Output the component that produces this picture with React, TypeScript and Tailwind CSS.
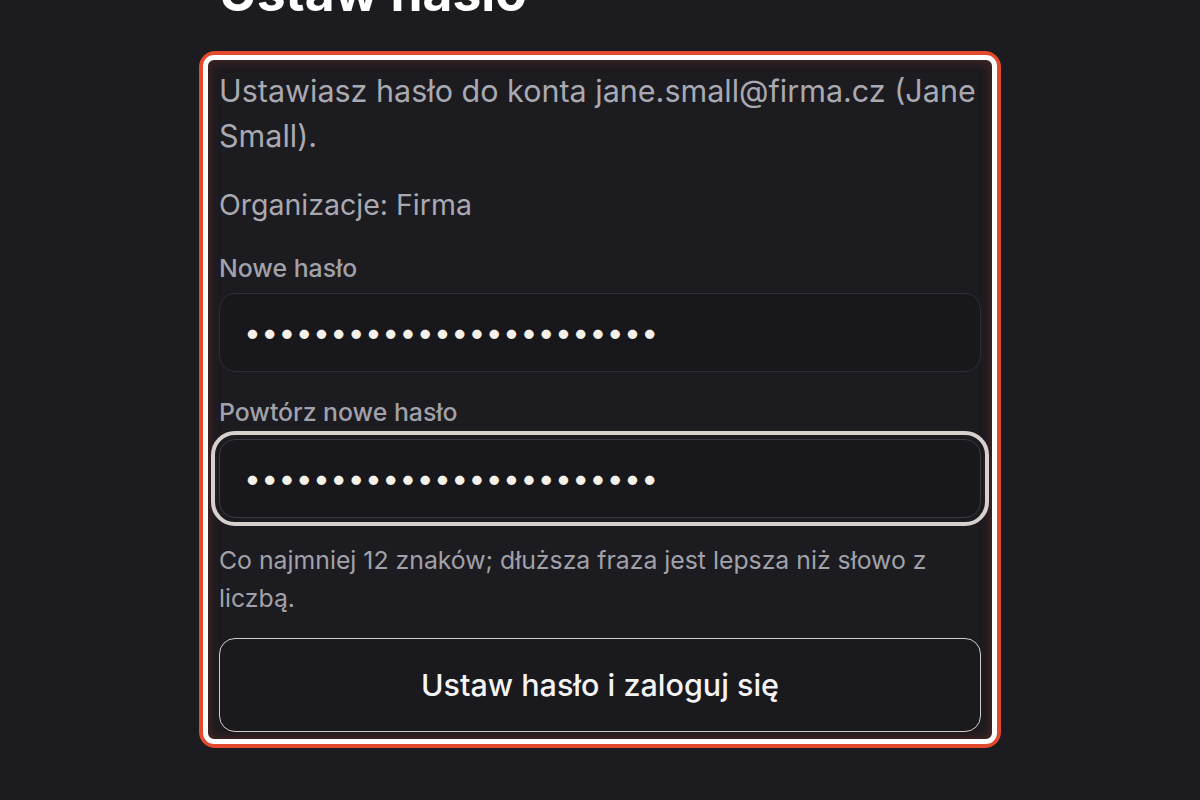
import React from 'react';

const App: React.FC = () => {
  return (
    <div className="min-h-screen bg-[#1c1b20] font-['Inter','Liberation_Sans',sans-serif] overflow-hidden">
      <div className="w-[802px] mx-auto">
        {/* nagłówek (ucięty u góry) */}
        <h1 className="mt-[-33px] pl-[20px] text-[51.5px] leading-none font-bold text-white">
          Ustaw hasło
        </h1>

        {/* formularz */}
        <div className="mt-[32px] border-4 border-[#e2492d] rounded-[16px]">
          <form
            className="border-[5px] border-white rounded-[11px] px-[11px] pt-[8px] pb-[7px] shadow-[inset_0_0_12px_rgba(190,60,40,0.35)]"
            onSubmit={(e) => e.preventDefault()}
          >
            <p className="-mr-[10px] text-[30.5px] leading-[45px] text-[#a9a9b1]">
              Ustawiasz hasło do konta jane.small@firma.cz (Jane Small).
            </p>
            <p className="mt-[24px] text-[28.5px] leading-[45px] text-[#a9a9b1]">
              Organizacje: Firma
            </p>

            <label className="block mt-[23px] text-[24.8px] leading-[36px] font-medium text-[#a1a1aa]">
              Nowe hasło
            </label>
            <input
              type="password"
              defaultValue="abcdefghijklmnopqrstuvwx"
              className="mt-[7px] block w-full h-[79px] px-[24px] rounded-[16px] border border-[#2f2e35] bg-[#18171c] text-[30px] tracking-[0.4px] text-[#f5f0e8] outline-none"
            />

            <label className="block mt-[22px] text-[24.8px] leading-[36px] font-medium text-[#a1a1aa]">
              Powtórz nowe hasło
            </label>
            <input
              type="password"
              defaultValue="abcdefghijklmnopqrstuvwx"
              className="mt-[9px] block w-full h-[79px] px-[24px] rounded-[16px] border border-[#3a3940] bg-[#18171c] text-[30px] tracking-[0.4px] text-[#f5f0e8] outline-[4px] outline-solid outline-[#d8d0cc] outline-offset-[4px]"
            />

            <p className="mt-[23px] text-[24.8px] leading-[38px] text-[#a1a1aa]">
              Co najmniej 12 znaków; dłuższa fraza jest lepsza niż słowo z liczbą.
            </p>

            <button
              type="submit"
              className="mt-[21px] w-full h-[94px] rounded-[16px] border-[1.5px] border-[#d2cdca] bg-[#1a191e] text-[30.5px] font-medium text-[#f4f4f5]"
            >
              Ustaw hasło i zaloguj się
            </button>
          </form>
        </div>
      </div>
    </div>
  );
};

export default App;
